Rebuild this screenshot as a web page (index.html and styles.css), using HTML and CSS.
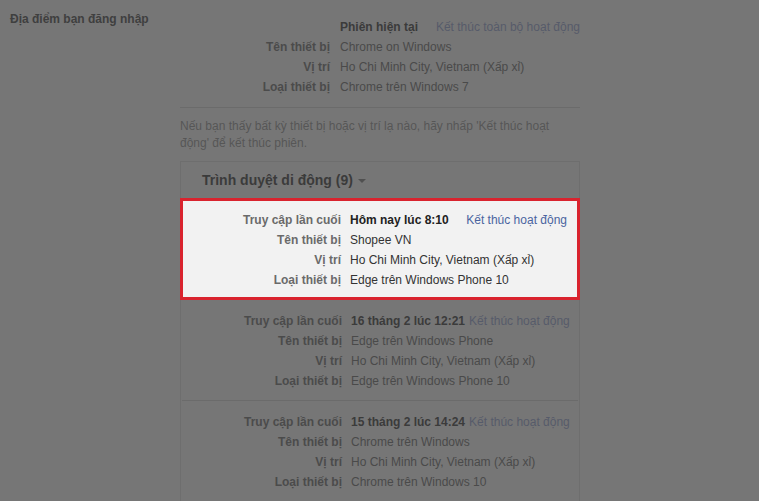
FILE: index.html
```html
<!DOCTYPE html>
<html lang="vi">
  <head>
    <meta charset="utf-8" />
    <title>Địa điểm bạn đăng nhập</title>
    <link rel="stylesheet" href="styles.css">
  </head>

  <body>
    <div class="page">
      <div class="section-title">Địa điểm bạn đăng nhập</div>

      <div class="section-body">
        <div class="current">
          <div class="label"></div>
          <div class="value row-split">
            <b>Phiên hiện tại</b>
            <a class="link">Kết thúc toàn bộ hoạt động</a>
          </div>
          <div class="label">Tên thiết bị</div>
          <div class="value">Chrome on Windows</div>
          <div class="label">Vị trí</div>
          <div class="value">Ho Chi Minh City, Vietnam (Xấp xỉ)</div>
          <div class="label">Loại thiết bị</div>
          <div class="value">Chrome trên Windows 7</div>
        </div>

        <p class="note">
          Nếu bạn thấy bất kỳ thiết bị hoặc vị trí lạ nào, hãy nhấp 'Kết thúc hoạt
          động' để kết thúc phiên.
        </p>

        <div class="panel">
          <div class="panel-head">
            Trình duyệt di động (9)
            <span class="caret"></span>
          </div>

          <div class="entry highlight">
            <div class="label">Truy cập lần cuối</div>
            <div class="value row-split">
              <b>Hôm nay lúc 8:10</b>
              <a class="link">Kết thúc hoạt động</a>
            </div>
            <div class="label">Tên thiết bị</div>
            <div class="value">Shopee VN</div>
            <div class="label">Vị trí</div>
            <div class="value">Ho Chi Minh City, Vietnam (Xấp xỉ)</div>
            <div class="label">Loại thiết bị</div>
            <div class="value">Edge trên Windows Phone 10</div>
          </div>

          <div class="entry">
            <div class="label">Truy cập lần cuối</div>
            <div class="value row-split">
              <b>16 tháng 2 lúc 12:21</b>
              <a class="link">Kết thúc hoạt động</a>
            </div>
            <div class="label">Tên thiết bị</div>
            <div class="value">Edge trên Windows Phone</div>
            <div class="label">Vị trí</div>
            <div class="value">Ho Chi Minh City, Vietnam (Xấp xỉ)</div>
            <div class="label">Loại thiết bị</div>
            <div class="value">Edge trên Windows Phone 10</div>
          </div>

          <div class="entry">
            <div class="label">Truy cập lần cuối</div>
            <div class="value row-split">
              <b>15 tháng 2 lúc 14:24</b>
              <a class="link">Kết thúc hoạt động</a>
            </div>
            <div class="label">Tên thiết bị</div>
            <div class="value">Chrome trên Windows</div>
            <div class="label">Vị trí</div>
            <div class="value">Ho Chi Minh City, Vietnam (Xấp xỉ)</div>
            <div class="label">Loại thiết bị</div>
            <div class="value">Chrome trên Windows 10</div>
          </div>
        </div>
      </div>
    </div>
  </body>
</html>
```

FILE: styles.css
```css
html {
  font-family: "Liberation Sans", Arial, sans-serif;
  font-size: 12px;
}

body {
  margin: 0;
  background-color: #767676;
  color: #474747;
  height: 501px;
  overflow: hidden;
}

.page {
  display: grid;
  grid-template-columns: 170px 400px;
  padding: 12px 0 0 10px;
}

.section-title {
  font-weight: bold;
  color: #3f3f3f;
  line-height: 15px;
}

.section-body {
  padding-top: 5px;
}

.current {
  display: grid;
  grid-template-columns: 150px 1fr;
  column-gap: 10px;
  grid-auto-rows: 20px;
  align-items: center;
  padding-bottom: 10px;
  border-bottom: 1px solid #6b6b6b;
}

.label {
  text-align: right;
  font-weight: bold;
  color: #4b4b4b;
  white-space: nowrap;
}

.value {
  color: #4a4a4a;
  white-space: nowrap;
}

.value b {
  color: #3b3b3b;
}

.row-split {
  display: flex;
  justify-content: space-between;
}

.link {
  color: #565b6a;
}

.note {
  margin: 10px 0 0;
  width: 385px;
  line-height: 17px;
  color: #565656;
}

.panel {
  margin-top: 9px;
  border: 1px solid #6e6e6e;
  border-bottom: none;
}

.panel-head {
  height: 36px;
  padding-left: 21px;
  display: flex;
  align-items: center;
  gap: 5px;
  font-size: 14px;
  font-weight: bold;
  color: #3b3b3b;
}

.caret {
  width: 0;
  height: 0;
  border-left: 4px solid transparent;
  border-right: 4px solid transparent;
  border-top: 4px solid #505050;
  margin-top: 2px;
}

.entry {
  display: grid;
  grid-template-columns: 160px 1fr;
  column-gap: 9px;
  grid-auto-rows: 20px;
  align-items: center;
  padding: 11px 11px 9px 0;
  margin: 0 1px;
  border-bottom: 1px solid #6b6b6b;
}

.entry .link {
  margin-left: 4px;
}

.highlight {
  margin: 0 -1px;
  padding: 9px 10px 7px 0;
  border: 3px solid #d9232e;
  background-color: #f2f2f2;
  grid-template-columns: 158px 1fr;
}

.highlight .label {
  color: #6a6a6a;
}

.highlight .value {
  color: #333;
}

.highlight .value b {
  color: #222;
}

.highlight .link {
  color: #4a64a0;
}
```
